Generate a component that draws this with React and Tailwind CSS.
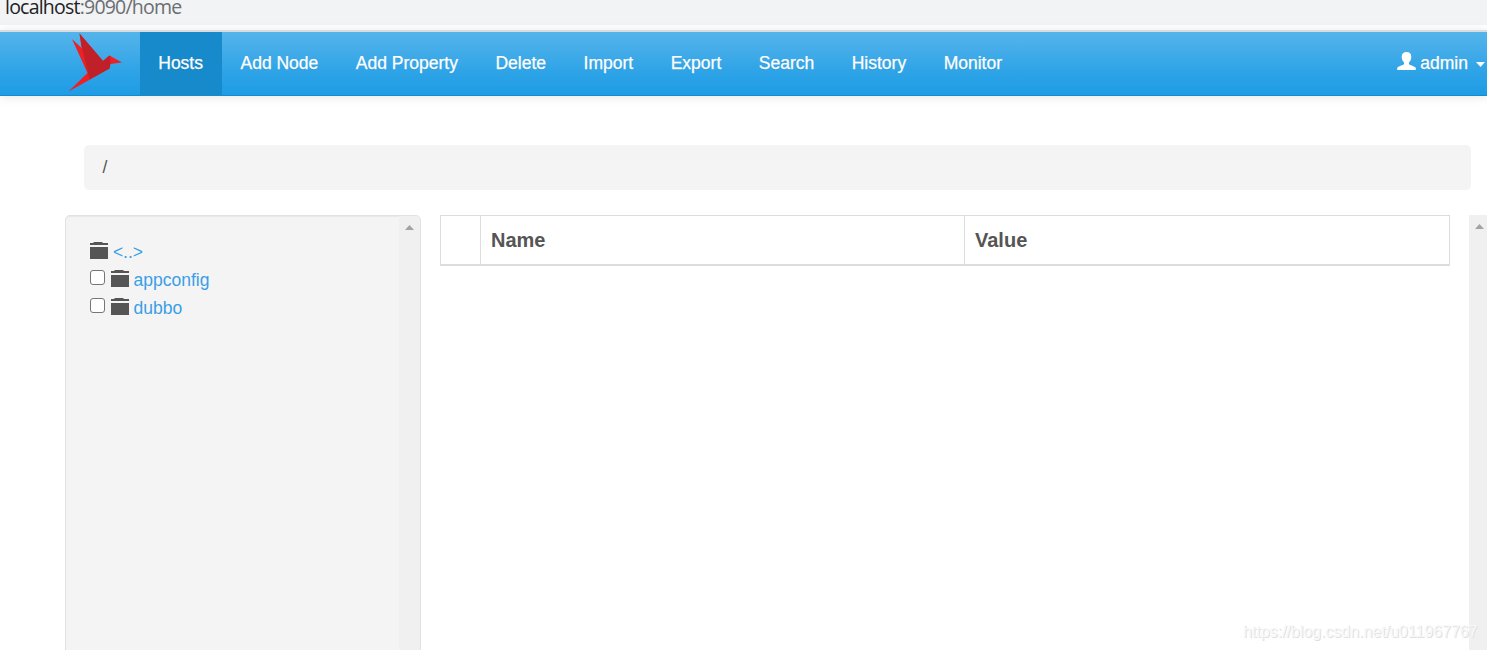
const menu = ['Hosts', 'Add Node', 'Add Property', 'Delete', 'Import', 'Export', 'Search', 'History', 'Monitor']
const nodes = ['appconfig', 'dubbo']

function Bird() {
  return (
    <svg width="56" height="60" viewBox="0 0 56 60" className="block">
      <path d="M3 6 12.500 15 10.500 0.500 34 28 40.500 22.500 53 29.500 41 31 40.500 35.500 21 46.500 -0.500 58.500 18.500 40Z" fill="#ed2024" />
      <path d="M10.500 0.500 34 28 40.500 22.500 41.500 31 40.500 35.500 20.500 46.500 13 14Z" fill="#c02028" />
    </svg>
  )
}

function Folder() {
  return (
    <svg width="18" height="18" viewBox="0 0 18 18" className="block shrink-0" fill="#555555">
      <path d="M0 3V1H3L4 0H12L13 1H18V3Z" />
      <path d="M0 5H18V17H0Z" />
    </svg>
  )
}

function ScrollArrow() {
  return (
    <svg width="9" height="5" viewBox="0 0 9 5" className="block" fill="#a3a3a3">
      <path d="M4.500 0 9 5H0Z" />
    </svg>
  )
}

export default function App() {
  return (
    <div className="relative h-[650px] w-[1487px] overflow-hidden bg-white font-['Liberation_Sans',Arial,sans-serif] text-[17.5px] text-[#555555]">
      {/* Address bar */}
      <div className="h-[25px] bg-[#f1f3f4] pl-[5px] font-['Open_Sans',sans-serif] text-[19.5px] leading-[14px] tracking-[-0.78px] text-[#6b6e72]">
        <span className="text-[#202124]">localhost</span>:9090/home
      </div>

      {/* Navbar */}
      <nav className="mt-[5px] flex h-[66px] border-t-2 border-b border-t-[#dadce0] border-b-[#178acc] bg-linear-to-b from-[#54b4eb] via-[#2fa4e7] via-60% to-[#1d9ce5] pl-[69px] text-white shadow-[0_1px_10px_rgba(0,0,0,0.1)] [text-shadow:0_1px_0_rgba(0,0,0,0.1)] [-webkit-text-stroke:0.25px_white]">
        <div className="w-[71px] pt-px">
          <Bird />
        </div>
        {menu.map((item) => (
          <a key={item} className={`pr-[19.25px] pl-[18.25px] leading-[62px] whitespace-nowrap ${item === 'Hosts' ? 'bg-[#178acc]' : ''}`}>
            {item}
          </a>
        ))}
        <a className="mr-[2px] ml-auto flex items-center leading-[62px]">
          <svg width="19" height="18" viewBox="0 0 19 18" className="mr-1 mb-[5px]" fill="#ffffff">
            <path d="M9.500 0C12.500 0 14.400 1.800 14.300 5C14.200 8 13 9.400 12 10.500V12C12.500 13.300 18 14 18.800 16V18H0.200V16C1 14 6.500 13.300 7 12V10.500C6 9.400 4.800 8 4.700 5C4.600 1.800 6.500 0 9.500 0Z" />
          </svg>
          <span className="mb-px">admin</span>
          <svg width="9" height="5" viewBox="0 0 9 5" className="mt-[2px] ml-2" fill="#ffffff">
            <path d="M0 0H9L4.500 5Z" />
          </svg>
        </a>
      </nav>

      {/* Breadcrumb */}
      <div className="mt-[49px] mr-4 ml-[84px] h-[45px] rounded-[5px] bg-[#f4f4f4] pl-[18.5px] leading-[44px]">/</div>

      <div className="mt-[25px] flex h-[450px] pl-[65px]">
        {/* Node tree */}
        <div className="flex w-[356px] overflow-hidden rounded-[5px] border border-[#e2e2e2] bg-[#f4f4f4] shadow-[inset_0_1px_1px_rgba(0,0,0,0.05)]">
          <div className="flex-1 pt-[21px] pl-6 leading-7">
            <div className="flex h-7 items-center">
              <Folder />
              <a className="ml-[5px] pt-[2px] tracking-[-0.1px] text-[#3a9fe6]">&lt;..&gt;</a>
            </div>
            {nodes.map((node) => (
              <div key={node} className="flex h-7 items-center">
                <span className="mr-[6px] mb-[3px] size-[15px] rounded-[3px] border border-[#767676] bg-white" />
                <Folder />
                <a className="ml-[4.500px] pt-[2px] text-[#3a9fe6]">{node}</a>
              </div>
            ))}
          </div>
          <div className="flex w-[21px] justify-center bg-[#f0f0f0] pt-[9px]">
            <ScrollArrow />
          </div>
        </div>

        {/* Properties */}
        <table className="ml-[19px] w-[1010px] table-fixed border-collapse self-start text-left text-[20px] leading-7">
          <thead>
            <tr className="h-[49px]">
              <th className="w-10 border border-b-2 border-[#dddddd]" />
              <th className="w-[484px] border border-b-2 border-[#dddddd] px-[10px]">Name</th>
              <th className="border border-b-2 border-[#dddddd] px-[10px]">Value</th>
            </tr>
          </thead>
        </table>
        <div className="ml-auto flex w-[18px] justify-center bg-[#f0f0f0] pt-[9px] pl-[3px]">
          <ScrollArrow />
        </div>
      </div>

      <div className="absolute top-[622px] left-[1243px] text-[16px] leading-5 tracking-[-0.03px] whitespace-nowrap text-[#f8f8f8] [text-shadow:1px_1px_0_#e0e0e0]">
        https://blog.csdn.net/u011967767
      </div>
    </div>
  )
}
